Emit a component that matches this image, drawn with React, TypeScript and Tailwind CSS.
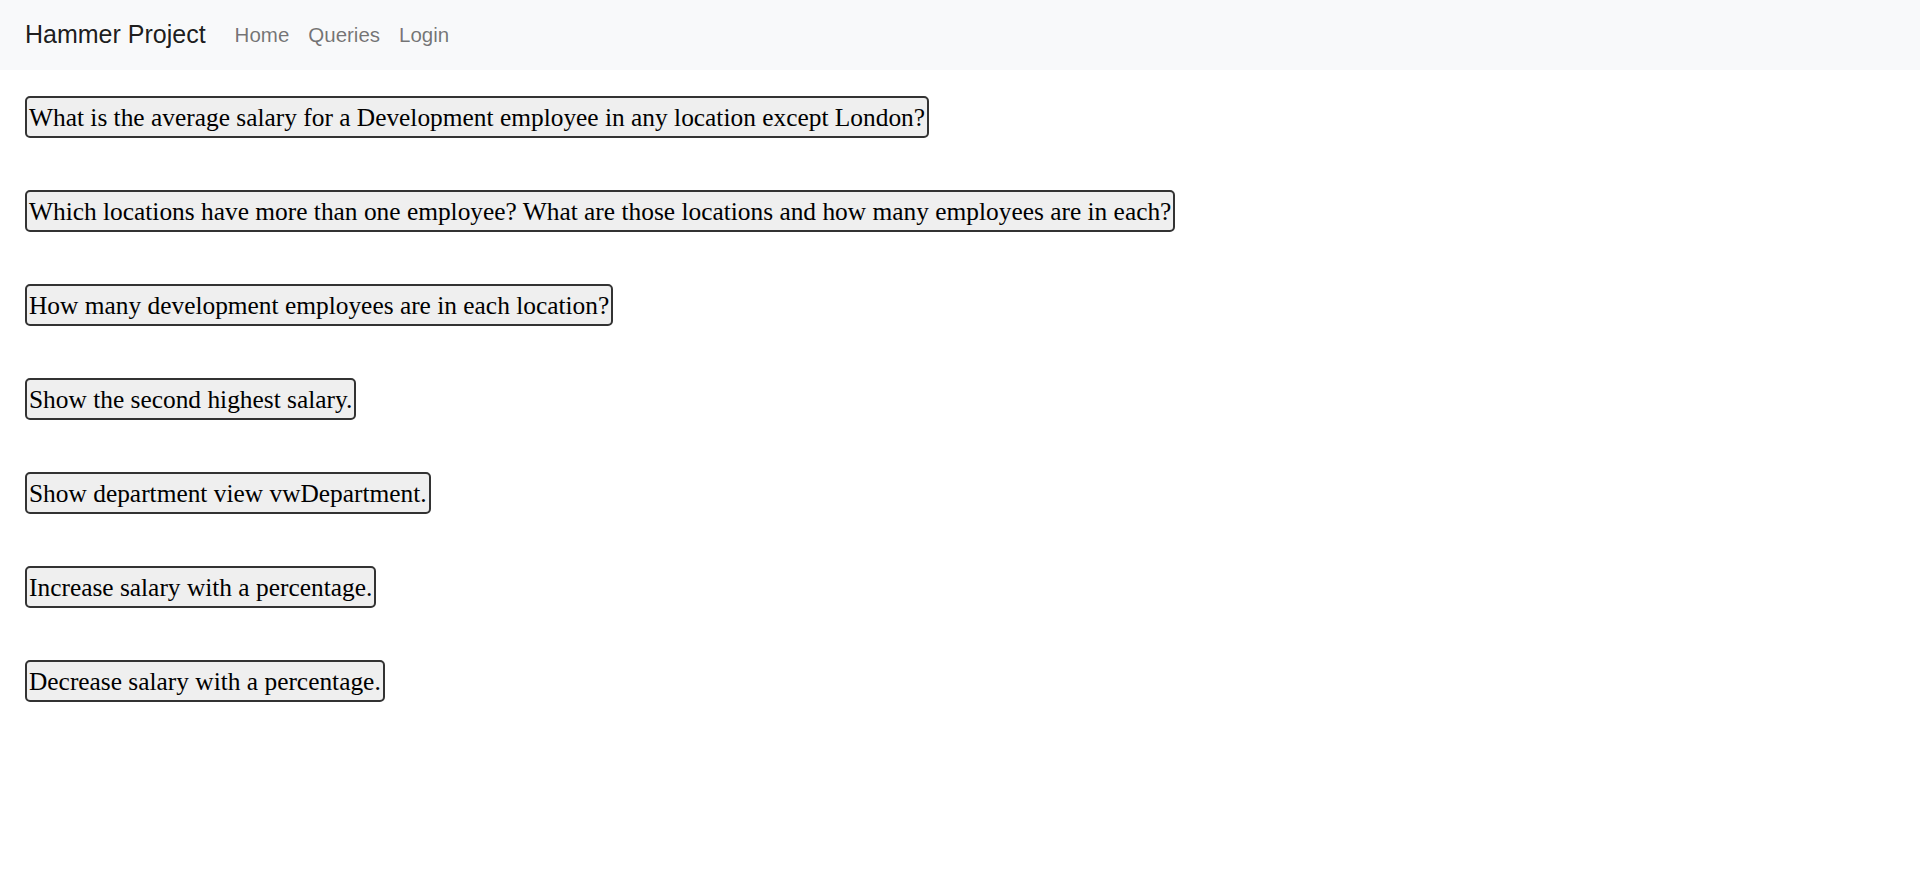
const queries = [
  'What is the average salary for a Development employee in any location except London?',
  'Which locations have more than one employee? What are those locations and how many employees are in each?',
  'How many development employees are in each location?',
  'Show the second highest salary.',
  'Show department view vwDepartment.',
  'Increase salary with a percentage.',
  'Decrease salary with a percentage.',
];

export default function App() {
  return (
    <div className="min-h-screen bg-white">
      {/* Navbar */}
      <nav className="flex h-[70px] items-center bg-[#f8f9fa] px-[25px] font-['Liberation_Sans',Arial,sans-serif]">
        <span className="mr-[29px] text-[25px] text-black/90">Hammer Project</span>
        <div className="flex gap-[19px] text-[20.5px] text-black/55">
          <a href="#">Home</a>
          <a href="#">Queries</a>
          <a href="#">Login</a>
        </div>
      </nav>

      {/* Query buttons */}
      <div className="flex flex-col items-start gap-[52px] px-[25px] pt-[26px]">
        {queries.map((q) => (
          <button
            key={q}
            className="h-[42px] rounded-[5px] border-2 border-[#333] bg-[#efefef] px-[2px] pt-[2px] font-['Liberation_Serif','Times_New_Roman',serif] text-[25.4px] leading-none text-black"
          >
            {q}
          </button>
        ))}
      </div>
    </div>
  );
}
